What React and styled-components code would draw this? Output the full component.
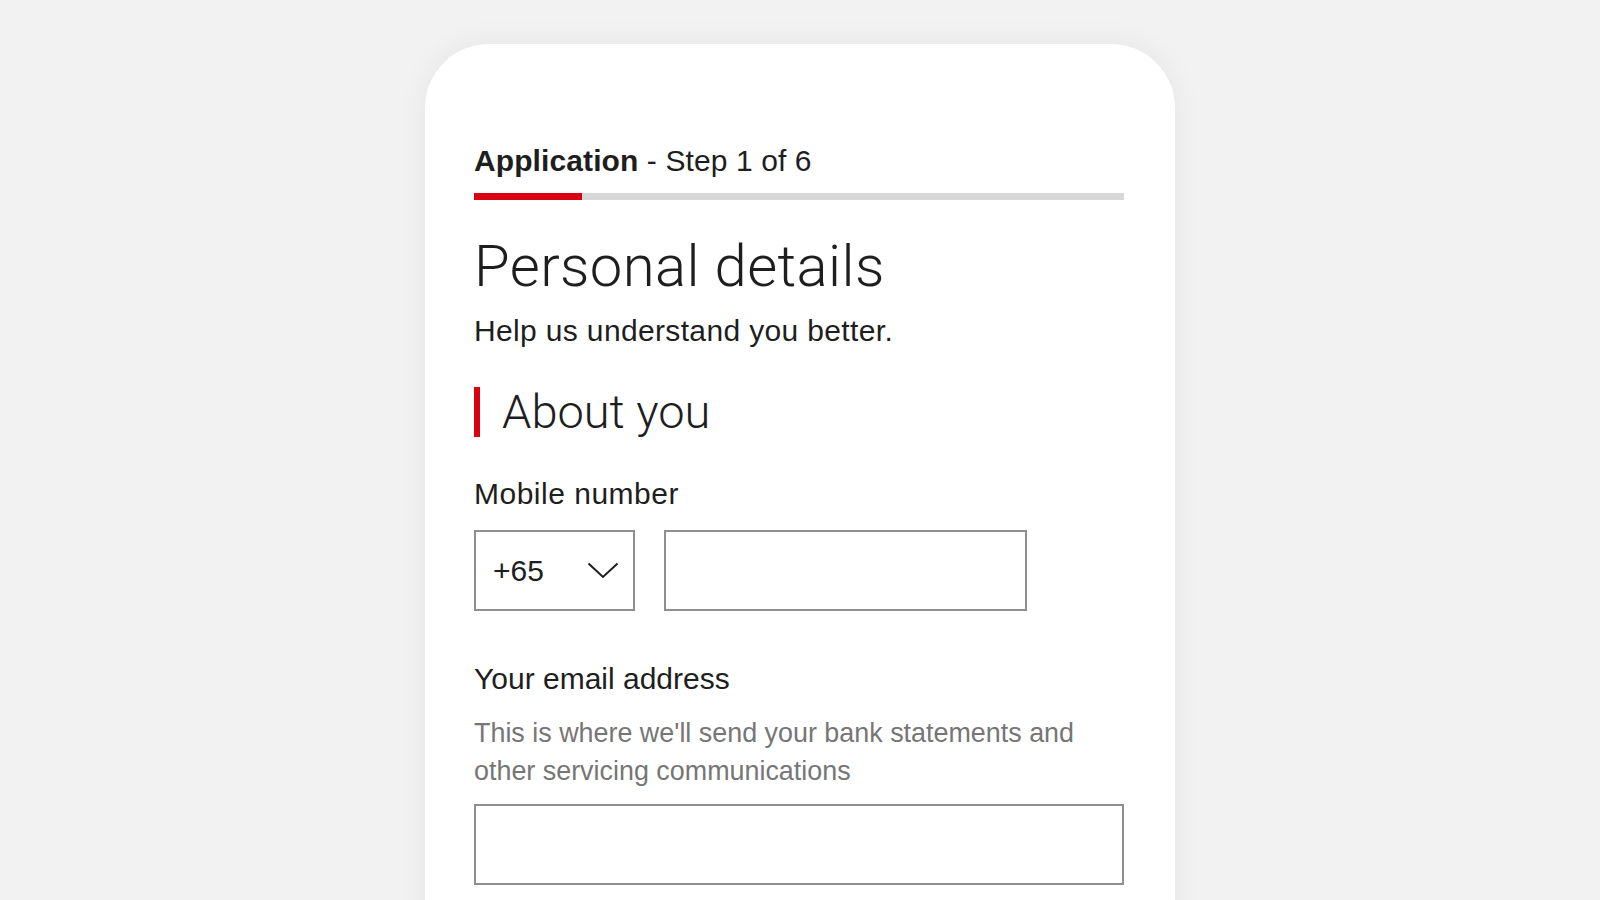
import React from "react";
import styled, {createGlobalStyle} from "styled-components";

const GlobalStyle = createGlobalStyle`
  html, body {
    margin: 0;
    padding: 0;
    background: #f2f2f2;
    height: 900px;
    overflow: hidden;
  }
  * {
    box-sizing: border-box;
  }
`;

const Page = styled.div`
  display: flex;
  justify-content: center;
  padding-top: 44px;
  height: 900px;
  font-family: "Liberation Sans", Arial, sans-serif;
  color: #1e1e1e;
`;

const Card = styled.div`
  width: 750px;
  height: 900px;
  background: #fff;
  border-radius: 64px 64px 0 0;
  box-shadow: 0 0 32px rgba(0, 0, 0, 0.06);
  padding: 99px 51px 0 49px;
  display: flex;
  flex-direction: column;
`;

const StepLine = styled.div`
  font-size: 30px;
  line-height: 36px;
  letter-spacing: 0.1px;
  b {
    font-weight: 700;
  }
`;

const Progress = styled.div`
  margin-top: 14px;
  height: 7px;
  background: #d7d7d7;
  display: flex;
`;

const ProgressFill = styled.div`
  width: ${p => p.pct}%;
  background: #db0011;
`;

const Title = styled.h1`
  margin: 36px 0 0;
  font-family: Roboto, "Liberation Sans", sans-serif;
  font-weight: 300;
  font-size: 58px;
  line-height: 60px;
  letter-spacing: 0.4px;
`;

const Intro = styled.p`
  margin: 17px 0 0;
  font-size: 30px;
  line-height: 36px;
  letter-spacing: 0.35px;
`;

const Section = styled.div`
  margin-top: 38px;
  display: flex;
  align-items: center;
  gap: 22px;
`;

const SectionBar = styled.span`
  width: 6px;
  height: 50px;
  background: #db0011;
`;

const SectionTitle = styled.h2`
  margin: 0;
  font-family: Roboto, "Liberation Sans", sans-serif;
  font-weight: 300;
  font-size: 47px;
  line-height: 50px;
`;

const Label = styled.div`
  margin-top: ${p => p.top}px;
  font-size: 30px;
  line-height: 36px;
  letter-spacing: ${p => p.ls || 0}px;
`;

const Hint = styled.div`
  margin-top: 17px;
  font-size: 26.9px;
  line-height: 38px;
  color: #767676;
`;

const Row = styled.div`
  margin-top: 18px;
  display: flex;
  gap: 29px;
`;

const Field = styled.div`
  width: ${p => p.w}px;
  height: 81px;
  border: 2px solid #8f8f8f;
  background: #fff;
  display: flex;
  align-items: center;
  justify-content: space-between;
  padding: 0 14px 0 17px;
  font-size: 30px;
  margin-top: ${p => p.top || 0}px;
`;

const Chevron = () => (
  <svg width="32" height="17" viewBox="0 0 32 17" fill="none">
    <polyline points="1.5,1.5 16,15 30.5,1.5" stroke="#1e1e1e" strokeWidth="2" />
  </svg>
);

export default function App() {
  return (
    <>
      <GlobalStyle />
      <Page>
        <Card>
          <StepLine>
            <b>Application</b> - Step 1 of 6
          </StepLine>
          <Progress>
            <ProgressFill pct={100 / 6} />
          </Progress>
          <Title>Personal details</Title>
          <Intro>Help us understand you better.</Intro>
          <Section>
            <SectionBar />
            <SectionTitle>About you</SectionTitle>
          </Section>
          <Label top={39} ls={0.5}>
            Mobile number
          </Label>
          <Row>
            <Field w={161}>
              +65
              <Chevron />
            </Field>
            <Field w={363} />
          </Row>
          <Label top={50}>Your email address</Label>
          <Hint>
            This is where we'll send your bank statements and
            <br />
            other servicing communications
          </Hint>
          <Field w={650} top={14} />
        </Card>
      </Page>
    </>
  );
}
